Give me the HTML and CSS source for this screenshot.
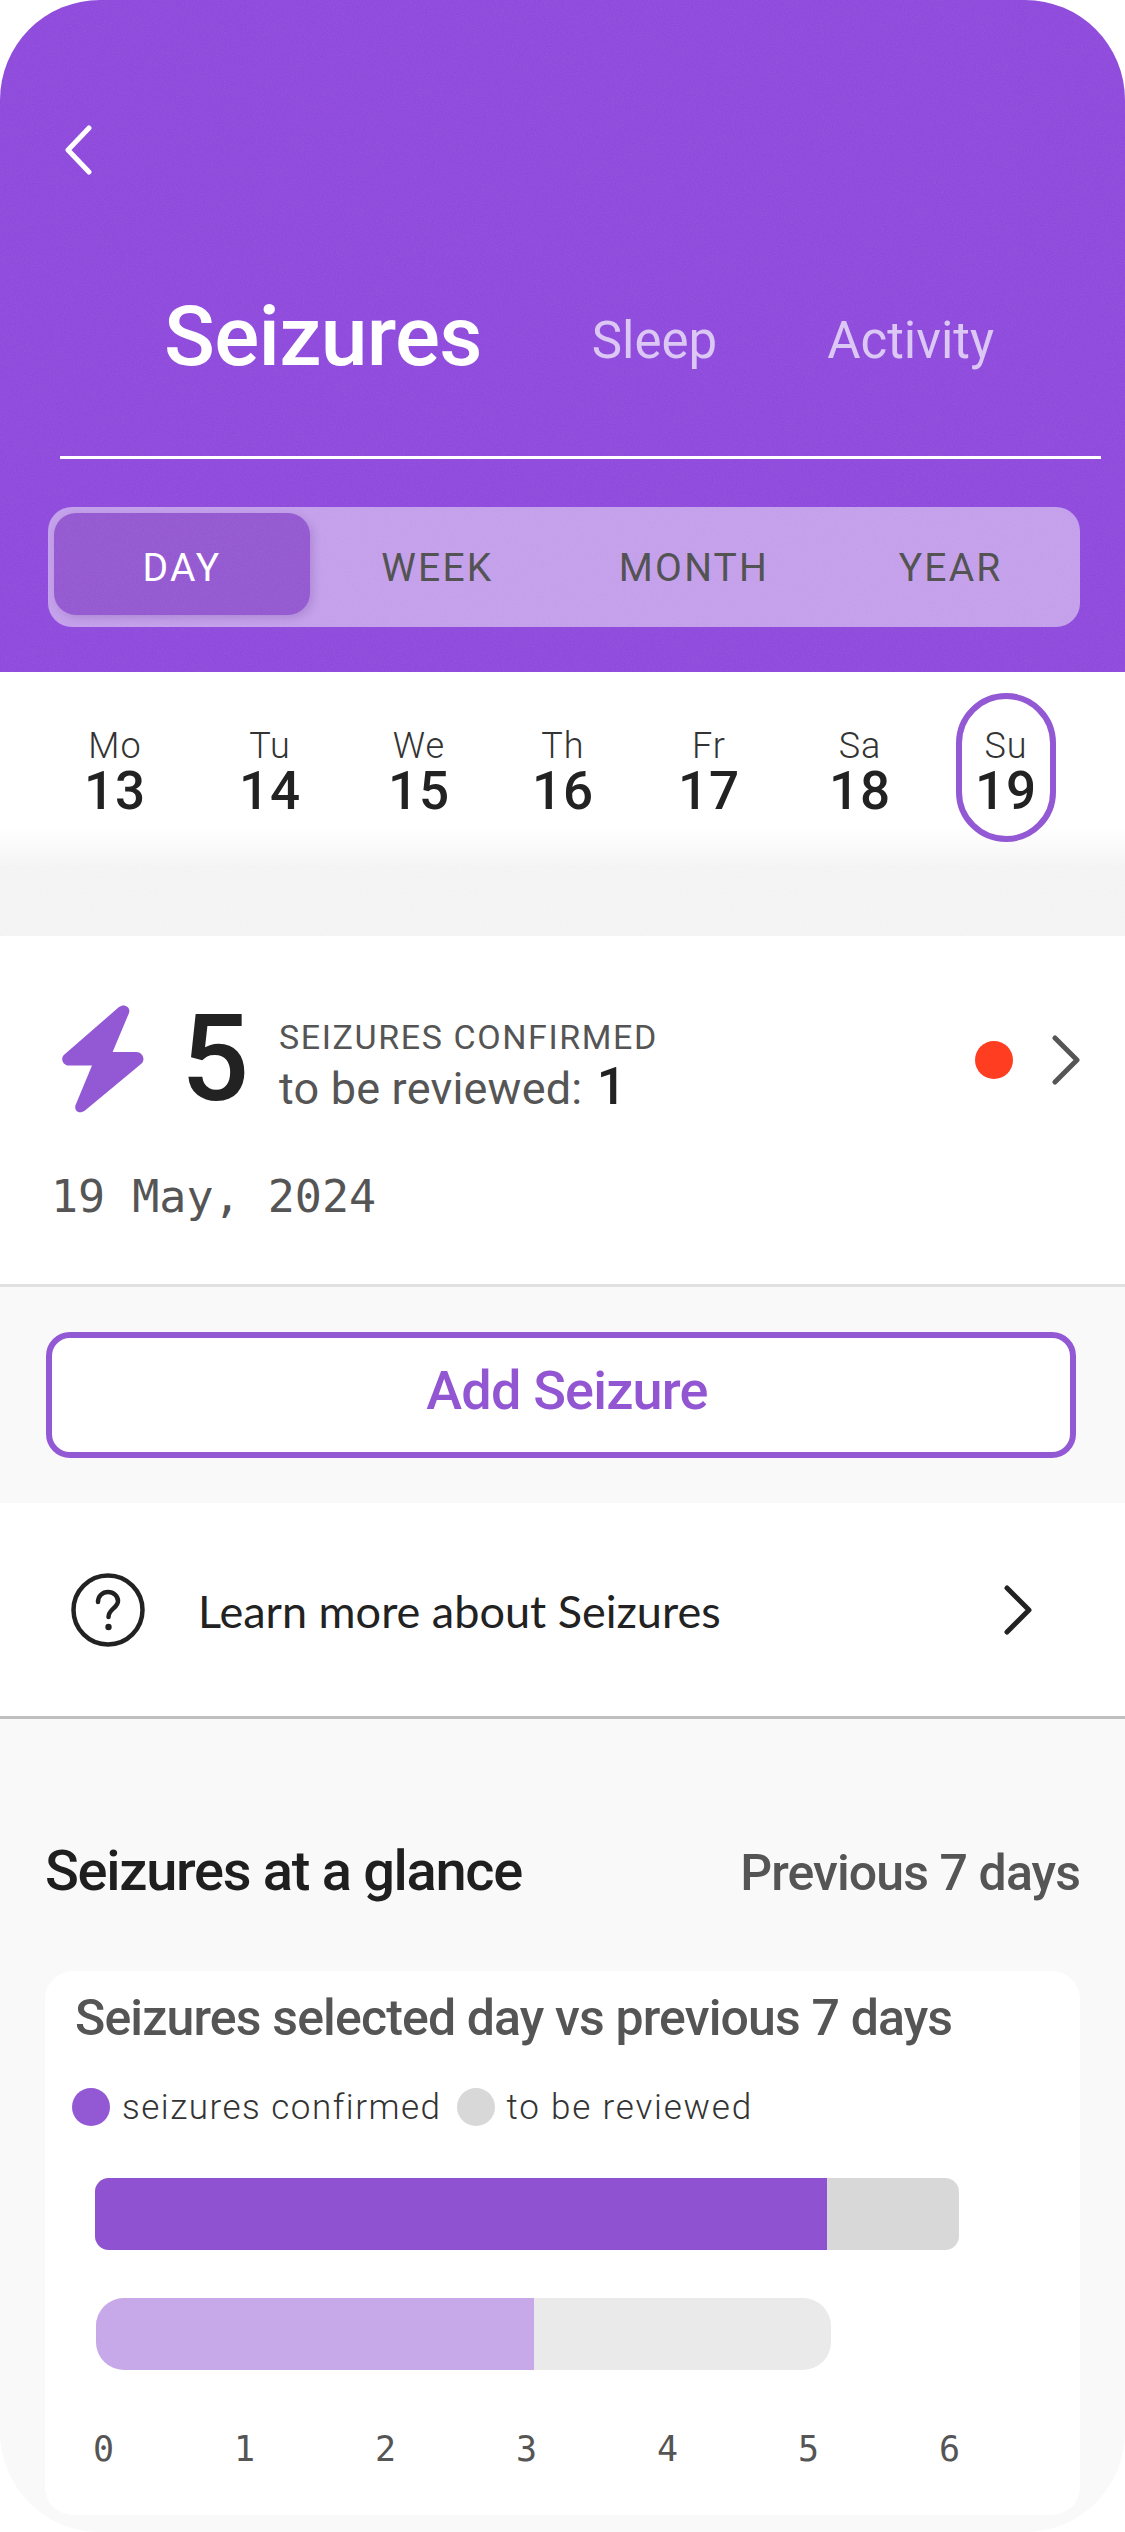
FILE: index.html
```html
<!DOCTYPE html>
<html lang="en">
<head>
<meta charset="utf-8">
<title>Seizures</title>
<link rel="stylesheet" href="styles.css">
</head>
<body>
<svg class="defs" width="0" height="0" aria-hidden="true">
  <filter id="grain"><feTurbulence type="fractalNoise" baseFrequency="0.9" numOctaves="2" seed="4"/><feColorMatrix values="0 0 0 0 1  0 0 0 0 1  0 0 0 0 1  0.9 0 0 0 -0.2"/></filter>
  <filter id="grain-dark"><feTurbulence type="fractalNoise" baseFrequency="0.8" numOctaves="2" seed="9"/><feColorMatrix values="0 0 0 0 0.5  0 0 0 0 0.5  0 0 0 0 0.5  0.9 0 0 0 -0.3"/></filter>
</svg>
<main class="screen">
  <header class="header">
    <svg class="back" width="30" height="50" viewBox="0 0 30 50" aria-hidden="true"><path d="M26 3 5 25l21 22" fill="none" stroke="#fff" stroke-width="5" stroke-linecap="round" stroke-linejoin="round"/></svg>
    <nav class="tabs">
      <span class="tab tab-active">Seizures</span>
      <span class="tab tab-sleep">Sleep</span>
      <span class="tab tab-activity">Activity</span>
    </nav>
    <div class="rule"></div>
    <div class="segments">
      <span class="seg seg-active">DAY</span>
      <span class="seg">WEEK</span>
      <span class="seg">MONTH</span>
      <span class="seg">YEAR</span>
    </div>
    <svg class="grain" aria-hidden="true"><rect width="100%" height="100%" filter="url(#grain)"/></svg>
  </header>

  <section class="week">
    <div class="day"><span class="dow">Mo</span><span class="num">13</span></div>
    <div class="day"><span class="dow">Tu</span><span class="num">14</span></div>
    <div class="day"><span class="dow">We</span><span class="num">15</span></div>
    <div class="day"><span class="dow">Th</span><span class="num">16</span></div>
    <div class="day"><span class="dow">Fr</span><span class="num">17</span></div>
    <div class="day"><span class="dow">Sa</span><span class="num">18</span></div>
    <div class="day day-selected"><span class="dow">Su</span><span class="num">19</span></div>
  </section>
  <div class="band"><svg class="grain-band" aria-hidden="true"><rect width="100%" height="100%" filter="url(#grain-dark)"/></svg></div>

  <section class="summary">
    <div class="summary-row">
      <svg class="bolt" width="82" height="108" viewBox="0 0 82 108" aria-hidden="true"><path d="M57 2C62-2 69 2 67 8L50.600 47H74C81 47 84 55 79 59L23 105.500C17 110 11 105 14 99L30 60.600H7C0 60.600-2 52 3 49Z" fill="#9358d4"/></svg>
      <span class="big">5</span>
      <div class="summary-text">
        <div class="confirmed">SEIZURES CONFIRMED</div>
        <div class="review">to be reviewed: <b>1</b></div>
      </div>
      <span class="dot"></span>
      <svg class="chev" width="28" height="50" viewBox="0 0 28 50" aria-hidden="true"><path d="M3 3l22 22L3 47" fill="none" stroke="#555" stroke-width="5" stroke-linecap="round" stroke-linejoin="round"/></svg>
    </div>
    <div class="date">19 May, 2024</div>
  </section>

  <section class="add">
    <button class="add-btn">Add Seizure</button>
  </section>

  <section class="learn">
    <svg class="help" width="74" height="74" viewBox="0 0 74 74" aria-hidden="true"><circle cx="37" cy="37" r="34.500" fill="none" stroke="#222" stroke-width="4.500"/><path d="M27 29c0-6 4.500-10 10-10s10 4 10 9c0 7-9.500 8-9.500 16" fill="none" stroke="#222" stroke-width="4.500" stroke-linecap="round"/><circle cx="37.500" cy="54" r="3.200" fill="#222"/></svg>
    <span class="learn-text">Learn more about Seizures</span>
    <svg class="learn-chev" width="30" height="50" viewBox="0 0 30 50" aria-hidden="true"><path d="M4 3l22 22L4 47" fill="none" stroke="#222" stroke-width="5" stroke-linecap="round" stroke-linejoin="round"/></svg>
  </section>

  <section class="glance">
    <div class="glance-head">
      <h2 class="glance-title">Seizures at a glance</h2>
      <span class="glance-range">Previous 7 days</span>
    </div>
    <div class="card">
      <h3 class="card-title">Seizures selected day vs previous 7 days</h3>
      <div class="legend">
        <span class="swatch swatch-purple"></span><span class="legend-text">seizures confirmed</span>
        <span class="swatch swatch-gray"></span><span class="legend-text legend-second">to be reviewed</span>
      </div>
      <div class="bar bar-now"><span class="fill fill-now"></span></div>
      <div class="bar bar-prev"><span class="fill fill-prev"></span></div>
      <div class="axis"><span>0</span><span>1</span><span>2</span><span>3</span><span>4</span><span>5</span><span>6</span></div>
    </div>
  </section>
</main>
</body>
</html>
```
FILE: styles.css
```css
*, *::before { box-sizing: border-box; margin: 0; padding: 0; }
html, body { background: #fff; }
body { width: 1125px; height: 2532px; overflow: hidden; font-family: "Roboto", sans-serif; color: #222; }
.defs { position: absolute; }
.screen { width: 1125px; height: 2532px; background: #f9f9f9; border-radius: 100px; overflow: hidden; }

/* header */
.header { position: relative; height: 672px; background: #8e49dc; overflow: hidden; }
.grain { position: absolute; inset: 0; width: 100%; height: 100%; opacity: .1; pointer-events: none; }
.back { position: absolute; left: 63px; top: 125px; }
.tabs { position: relative; display: flex; align-items: flex-start; padding: 287px 0 0 164px; height: 456px; }
.tab { line-height: 100px; }
.tab-active { font-size: 84px; font-weight: 500; letter-spacing: -.7px; color: #fff; }
.tab-sleep { font-size: 51px; color: #dbc6f4; margin: 4px 0 0 110px; }
.tab-activity { font-size: 51px; color: #dbc6f4; margin: 4px 0 0 110px; }
.rule { position: relative; height: 3px; margin: 0 24px 0 60px; background: #fff; }
.segments { position: relative; display: grid; grid-template-columns: 256px repeat(3, 1fr); margin: 48px 45px 0 48px; height: 120px; padding: 6px 0 6px 6px; border-radius: 24px; background: #c39fea; }
.seg { display: flex; align-items: center; justify-content: center; font-size: 39px; font-weight: 400; letter-spacing: 2.200px; color: #4f4f4f; padding-top: 2px; margin-left: -2px; }
.seg-active { color: #fff; background: #9357d0; border-radius: 22px; margin: 0 0 6px; padding-top: 8px; box-shadow: 3px 3px 8px rgba(70, 30, 120, .18); }

/* week strip */
.week { position: relative; z-index: 1; display: grid; grid-template-columns: 155px 149px 144px 146px 151px 146px 56px; height: 155px; padding: 21px 0 0 87px; }
.day { position: relative; display: flex; flex-direction: column; align-items: center; width: 56px; }
.dow { font-size: 36px; line-height: 42px; margin-top: 32px; font-weight: 300; color: #333; letter-spacing: 1px; white-space: nowrap; }
.num { font-size: 53px; line-height: 48px; font-weight: 500; color: #222; letter-spacing: 1px; }
.day-selected::before { content: ""; position: absolute; left: -22px; top: 0; width: 100px; height: 149px; border: 6px solid #9358d4; border-radius: 50px; }
.band { position: relative; height: 109px; margin-top: -155px; padding-top: 155px; box-sizing: content-box; background: linear-gradient(#fff 155px, #f5f5f5 193px, #f5f5f5 100%); overflow: hidden; }
.grain-band { position: absolute; left: 0; top: 193px; width: 100%; height: 71px; opacity: .12; }

/* summary */
.summary { height: 351px; background: #fff; border-bottom: 3px solid #e0e0e0; padding: 69px 45px 0 62px; }
.summary-row { display: flex; align-items: flex-start; }
.bolt { flex: none; }
.big { font-size: 120px; line-height: 108px; font-weight: 500; color: #222; margin: 0 0 0 37px; width: 98px; }
.summary-text { flex: 1; padding-top: 10px; }
.confirmed { font-size: 34px; line-height: 44px; letter-spacing: 1.600px; color: #555; }
.review { font-size: 45px; line-height: 52px; margin-top: 4px; color: #555; font-weight: 400; letter-spacing: .2px; }
.review b { color: #222; font-size: 52px; line-height: 40px; font-weight: 500; margin-left: 3px; }
.dot { flex: none; width: 38px; height: 38px; margin: 36px 39px 0 0; border-radius: 50%; background: #ff3d20; }
.chev { flex: none; margin-top: 30px; }
.date { margin: 52px 0 0 -11px; font-family: "DejaVu Sans Mono", monospace; font-size: 45px; line-height: 60px; color: #555; }

/* add */
.add { height: 216px; padding: 45px 49px 0 46px; }
.add-btn { display: block; width: 100%; height: 126px; padding: 0 0 10px 12px; font-family: inherit; font-size: 54px; font-weight: 500; letter-spacing: -.8px; color: #9356d2; background: #fff; border: 6px solid #9358d4; border-radius: 24px; }

/* learn */
.learn { display: flex; align-items: center; height: 216px; background: #fff; border-bottom: 3px solid #bfbfbf; padding: 0 92px 0 71px; }
.learn-text { flex: 1; margin-left: 53px; padding-top: 2px; font-family: "Lato", sans-serif; font-size: 45px; color: #222; }

/* glance */
.glance { padding: 0 45px; }
.glance-head { display: flex; justify-content: space-between; align-items: baseline; padding-top: 112px; height: 252px; }
.glance-title { font-size: 56px; line-height: 80px; font-weight: 500; letter-spacing: -1.300px; color: #1f1f1f; }
.glance-range { font-size: 50px; line-height: 76px; font-weight: 500; letter-spacing: -.9px; color: #555; }
.card { height: 544px; background: #fff; border-radius: 28px; padding: 17px 0 0 30px; }
.card-title { font-size: 50px; line-height: 60px; font-weight: 500; letter-spacing: -.85px; color: #555; white-space: nowrap; }
.legend { display: flex; align-items: center; gap: 12px; margin: 39px 0 0 -3px; height: 40px; }
.swatch { width: 38px; height: 38px; border-radius: 50%; }
.swatch-purple { background: #9358d4; }
.swatch-gray { background: #d8d8d8; margin-left: 3px; }
.legend-text { font-size: 35px; font-weight: 300; letter-spacing: 1.500px; color: #333; }
.legend-second { letter-spacing: 1.800px; }
.bar { height: 72px; overflow: hidden; }
.fill { display: block; height: 100%; }
.bar-now { width: 864px; margin: 51px 0 0 20px; background: #d8d8d8; border-radius: 14px; }
.fill-now { width: 732px; background: #8f52d0; }
.bar-prev { width: 735px; margin: 48px 0 0 21px; background: #eaeaea; border-radius: 28px; }
.fill-prev { width: 438px; background: #c7a8e8; }
.axis { display: grid; grid-template-columns: repeat(7, 141px); margin: 61px 0 0 -42px; font-family: "DejaVu Sans Mono", monospace; font-size: 35px; line-height: 36px; color: #555; text-align: center; }
```
